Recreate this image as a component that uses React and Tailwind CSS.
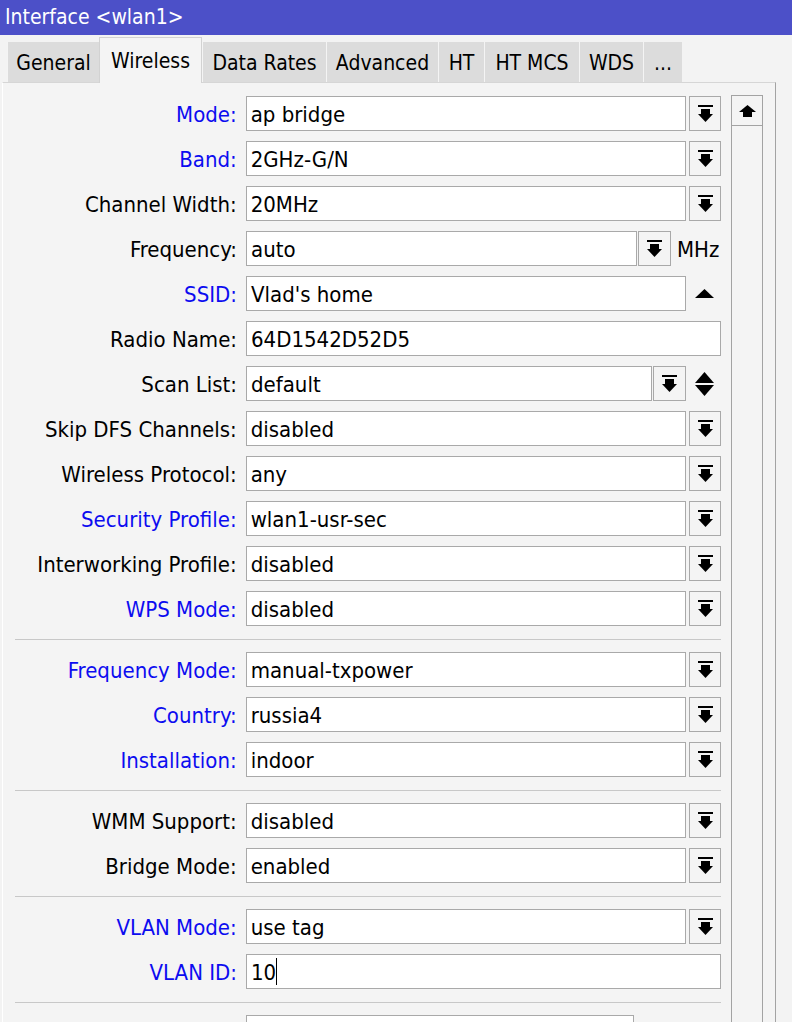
import React from 'react';

const DropIcon = () => (
  <svg width="15" height="17" viewBox="0 0 15 17">
    <rect x="0" y="0" width="15" height="2" fill="#000" />
    <rect x="3" y="4" width="9" height="6" fill="#000" />
    <polygon points="0,9 15,9 7.5,17" fill="#000" />
  </svg>
);

const UpArrow = () => (
  <svg width="17" height="12" viewBox="0 0 17 12">
    <polygon points="8.5,0 17,7 0,7" fill="#000" />
    <rect x="4" y="6" width="9" height="6" fill="#000" />
  </svg>
);

const Box = ({ w, children }) => (
  <div className={`h-full ${w} border border-[#a9a9a9] bg-white pl-[4px] pt-[2px] flex items-center whitespace-nowrap overflow-hidden`}>
    {children}
  </div>
);

const Btn = ({ cls }) => (
  <div className={`h-full ${cls} border border-[#a9a9a9] bg-[#f4f4f4] flex items-center justify-center`}>
    <DropIcon />
  </div>
);

const groups = [
  [
    { label: 'Mode', blue: true, value: 'ap bridge', kind: 'select' },
    { label: 'Band', blue: true, value: '2GHz-G/N', kind: 'select' },
    { label: 'Channel Width', value: '20MHz', kind: 'select' },
    { label: 'Frequency', value: 'auto', kind: 'freq' },
    { label: 'SSID', blue: true, value: "Vlad's home", kind: 'ssid' },
    { label: 'Radio Name', value: '64D1542D52D5', kind: 'text' },
    { label: 'Scan List', value: 'default', kind: 'scan' },
    { label: 'Skip DFS Channels', value: 'disabled', kind: 'select' },
    { label: 'Wireless Protocol', value: 'any', kind: 'select' },
    { label: 'Security Profile', blue: true, value: 'wlan1-usr-sec', kind: 'select' },
    { label: 'Interworking Profile', value: 'disabled', kind: 'select' },
    { label: 'WPS Mode', blue: true, value: 'disabled', kind: 'select' },
  ],
  [
    { label: 'Frequency Mode', blue: true, value: 'manual-txpower', kind: 'select' },
    { label: 'Country', blue: true, value: 'russia4', kind: 'select' },
    { label: 'Installation', blue: true, value: 'indoor', kind: 'select' },
  ],
  [
    { label: 'WMM Support', value: 'disabled', kind: 'select' },
    { label: 'Bridge Mode', value: 'enabled', kind: 'select' },
  ],
  [
    { label: 'VLAN Mode', blue: true, value: 'use tag', kind: 'select' },
    { label: 'VLAN ID', blue: true, value: '10', kind: 'caret' },
  ],
  [{ label: '', value: '', kind: 'short' }],
];

const tabs = [
  { name: 'General', w: 'w-[92px]' },
  { name: 'Wireless', w: 'w-[103px]', active: true },
  { name: 'Data Rates', w: 'w-[124px]' },
  { name: 'Advanced', w: 'w-[112px]' },
  { name: 'HT', w: 'w-[46px]' },
  { name: 'HT MCS', w: 'w-[95px]' },
  { name: 'WDS', w: 'w-[64px]' },
  { name: '...', w: 'w-[39px]' },
];

function Control({ row }) {
  switch (row.kind) {
    case 'select':
      return (
        <>
          <Box w="w-[441px]">{row.value}</Box>
          <Btn cls="ml-[3px] w-[32px]" />
        </>
      );
    case 'freq':
      return (
        <>
          <Box w="w-[391px]">{row.value}</Box>
          <Btn cls="ml-[1px] w-[33px]" />
          <span className="ml-[6px] pt-[2px]">MHz</span>
        </>
      );
    case 'ssid':
      return (
        <>
          <Box w="w-[440px]">{row.value}</Box>
          <svg className="ml-[9px]" width="19" height="9" viewBox="0 0 19 9">
            <polygon points="9.5,0 19,9 0,9" fill="#000" />
          </svg>
        </>
      );
    case 'scan':
      return (
        <>
          <Box w="w-[406px]">{row.value}</Box>
          <Btn cls="ml-[1px] w-[33px]" />
          <svg className="ml-[9px]" width="19" height="24" viewBox="0 0 19 24">
            <polygon points="9.5,0 19,11 0,11" fill="#000" />
            <polygon points="0,13 19,13 9.5,24" fill="#000" />
          </svg>
        </>
      );
    case 'caret':
      return (
        <Box w="w-[475px]">
          {row.value}
          <span className="inline-block w-px h-[27px] -mt-[2px] bg-black" />
        </Box>
      );
    case 'short':
      return <Box w="w-[388px]" />;
    default:
      return <Box w="w-[475px]">{row.value}</Box>;
  }
}

export default function App() {
  return (
    <div className="w-[792px] h-[1022px] overflow-hidden bg-[#f3f3f3] font-['DejaVu_Sans_Condensed','Liberation_Sans',sans-serif] text-black">
      {/* window title */}
      <div className="h-[35px] bg-[#4c50c8] text-white text-[21px] leading-[35px] pl-[5px]">
        Interface &lt;wlan1&gt;
      </div>

      {/* tab strip */}
      <div className="h-[47px] flex items-end pl-[7px]">
        {tabs.map((t) =>
          t.active ? (
            <div
              key={t.name}
              className={`${t.w} h-[46px] -mb-px relative bg-[#f4f4f4] border border-b-0 border-[#d2d2d2] flex items-center justify-center pt-[2px] text-[21px]`}
            >
              {t.name}
            </div>
          ) : (
            <div
              key={t.name}
              className={`${t.w} h-[40px] bg-[#dcdcdc] border-l border-l-[#f4f4f4] flex items-center justify-center pt-[3px] text-[21px]`}
            >
              {t.name}
            </div>
          )
        )}
      </div>

      {/* panel */}
      <div className="ml-[2px] w-[774px] h-[940px] flex bg-[#f4f4f4] border-l border-l-white border-t border-t-[#d6d6d6] border-r border-r-[#a3a3a3]">
        <div className="w-[718px] pl-[12px] pt-[13px] text-[22px]">
          {groups.map((g, gi) => (
            <div key={gi}>
              {gi > 0 && <div className="h-px bg-[#c8c8c8] w-[706px] mt-[13px] mb-[12px]" />}
              <div className="flex flex-col gap-[10px]">
                {g.map((row, ri) => (
                  <div key={ri} className="flex h-[35px] items-center">
                    <div
                      className={`w-[222px] mr-[9px] pt-[2px] text-right whitespace-nowrap ${
                        row.blue ? 'text-[#0c0cf0]' : 'text-black'
                      }`}
                    >
                      {row.label ? `${row.label}:` : ''}
                    </div>
                    <Control row={row} />
                  </div>
                ))}
              </div>
            </div>
          ))}
        </div>

        {/* scrollbar */}
        <div className="ml-[10px] mt-[12px] w-[32px] border-l border-r border-[#a3a3a3] flex flex-col">
          <div className="h-[31px] border-t border-b border-[#a3a3a3] flex items-center justify-center">
            <UpArrow />
          </div>
        </div>
      </div>
    </div>
  );
}
